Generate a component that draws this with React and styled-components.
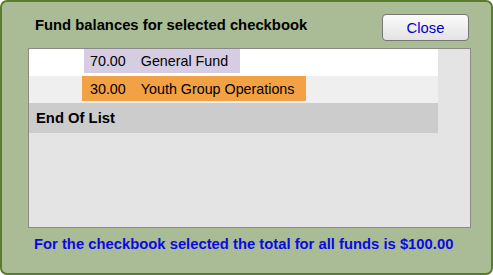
import React from 'react'
import styled, { createGlobalStyle } from 'styled-components'

const funds = [
  { amount: '70.00', name: 'General Fund', color: '#d6cde3', shift: 55, height: 24, bg: '#ffffff' },
  { amount: '30.00', name: 'Youth Group Operations', color: '#f2a144', shift: 53, height: 25, bg: '#efefef' },
]

const GlobalStyle = createGlobalStyle`
  html, body {
    margin: 0;
    padding: 0;
    background: #ffffff;
  }
  body {
    font-family: "Liberation Sans", Arial, sans-serif;
  }
`

const Window = styled.div`
  box-sizing: border-box;
  width: 493px;
  height: 275px;
  background: #a9bc95;
  border: 2px solid #5b7c2e;
  border-radius: 7px;
  padding: 0 20px 0 26px;
  display: flex;
  flex-direction: column;
`

const Header = styled.div`
  display: flex;
  justify-content: space-between;
  align-items: flex-start;
  padding-top: 12px;
  margin-bottom: 7px;
`

const Title = styled.div`
  margin: 3px 0 0 7px;
  font-size: 14.8px;
  font-weight: bold;
  color: #000;
  line-height: 17px;
`

const CloseButton = styled.button`
  box-sizing: border-box;
  width: 87px;
  height: 27px;
  margin-right: 2px;
  border: 1px solid #767676;
  border-radius: 4px;
  background: linear-gradient(#fbfbfb, #e3e3e3);
  color: #0000c8;
  font-family: "Liberation Sans", Arial, sans-serif;
  font-size: 14.8px;
  padding: 0;
  cursor: pointer;
`

const ListBox = styled.div`
  box-sizing: border-box;
  height: 180px;
  border: 1px solid #8a8a8a;
  background: #e4e4e4;
  display: flex;
  flex-direction: column;
`

const Row = styled.div`
  width: 409px;
  height: 27px;
  background: ${p => p.$bg};
  display: flex;
  align-items: flex-start;
`

const Cell = styled.div`
  margin-left: ${p => p.$shift}px;
  height: ${p => p.$height}px;
  background: ${p => p.$color};
  display: flex;
  align-items: center;
  padding: 0 12px 0 ${p => 61 - p.$shift}px;
  font-size: 14.3px;
  color: #000;
`

const Amount = styled.span`
  margin-right: 15px;
`

const EndRow = styled.div`
  width: 409px;
  height: 30px;
  background: #cccccc;
  display: flex;
  align-items: center;
  padding-left: 7px;
  box-sizing: border-box;
  font-size: 14.8px;
  font-weight: bold;
  color: #000;
`

const Total = styled.div`
  margin: 8px 0 0 6px;
  font-size: 14.8px;
  font-weight: bold;
  color: #0a0ae6;
  line-height: 17px;
`

export default function App() {
  return (
    <>
      <GlobalStyle />
      <Window>
        <Header>
          <Title>Fund balances for selected checkbook</Title>
          <CloseButton>Close</CloseButton>
        </Header>
        <ListBox>
          {funds.map(f => (
            <Row key={f.name} $bg={f.bg}>
              <Cell $color={f.color} $shift={f.shift} $height={f.height}>
                <Amount>{f.amount}</Amount>
                {f.name}
              </Cell>
            </Row>
          ))}
          <EndRow>End Of List</EndRow>
        </ListBox>
        <Total>For the checkbook selected the total for all funds is $100.00</Total>
      </Window>
    </>
  )
}
